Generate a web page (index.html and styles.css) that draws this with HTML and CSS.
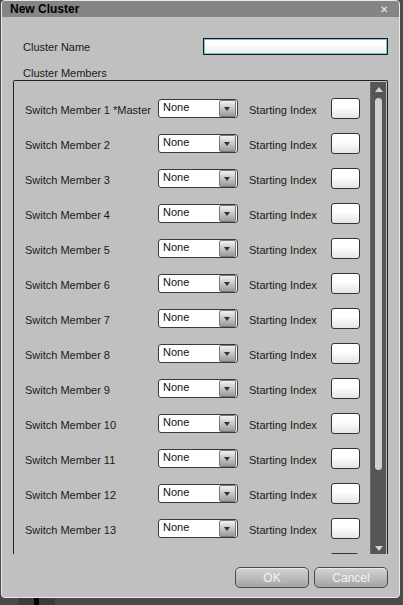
FILE: index.html
```html
<!DOCTYPE html>
<html>
<head>
<meta charset="utf-8">
<link rel="stylesheet" href="styles.css">
</head>
<body>
<div class="backdrop">
  <div class="dialog">
    <div class="titlebar">
      <span class="title">New Cluster</span>
      <span class="close">&#x2715;</span>
    </div>
    <div class="content">
      <div class="name-row">
        <span class="label">Cluster Name</span>
        <div class="name-input"></div>
      </div>
      <div class="members-label">Cluster Members</div>
      <div class="panel">
        <div class="rows">
          <div class="row"><span class="m-label">Switch Member 1 *Master</span><div class="select"><span>None</span><span class="arrow"></span></div><span class="si">Starting Index</span><div class="idx"></div></div>
          <div class="row"><span class="m-label">Switch Member 2</span><div class="select"><span>None</span><span class="arrow"></span></div><span class="si">Starting Index</span><div class="idx"></div></div>
          <div class="row"><span class="m-label">Switch Member 3</span><div class="select"><span>None</span><span class="arrow"></span></div><span class="si">Starting Index</span><div class="idx"></div></div>
          <div class="row"><span class="m-label">Switch Member 4</span><div class="select"><span>None</span><span class="arrow"></span></div><span class="si">Starting Index</span><div class="idx"></div></div>
          <div class="row"><span class="m-label">Switch Member 5</span><div class="select"><span>None</span><span class="arrow"></span></div><span class="si">Starting Index</span><div class="idx"></div></div>
          <div class="row"><span class="m-label">Switch Member 6</span><div class="select"><span>None</span><span class="arrow"></span></div><span class="si">Starting Index</span><div class="idx"></div></div>
          <div class="row"><span class="m-label">Switch Member 7</span><div class="select"><span>None</span><span class="arrow"></span></div><span class="si">Starting Index</span><div class="idx"></div></div>
          <div class="row"><span class="m-label">Switch Member 8</span><div class="select"><span>None</span><span class="arrow"></span></div><span class="si">Starting Index</span><div class="idx"></div></div>
          <div class="row"><span class="m-label">Switch Member 9</span><div class="select"><span>None</span><span class="arrow"></span></div><span class="si">Starting Index</span><div class="idx"></div></div>
          <div class="row"><span class="m-label">Switch Member 10</span><div class="select"><span>None</span><span class="arrow"></span></div><span class="si">Starting Index</span><div class="idx"></div></div>
          <div class="row"><span class="m-label">Switch Member 11</span><div class="select"><span>None</span><span class="arrow"></span></div><span class="si">Starting Index</span><div class="idx"></div></div>
          <div class="row"><span class="m-label">Switch Member 12</span><div class="select"><span>None</span><span class="arrow"></span></div><span class="si">Starting Index</span><div class="idx"></div></div>
          <div class="row"><span class="m-label">Switch Member 13</span><div class="select"><span>None</span><span class="arrow"></span></div><span class="si">Starting Index</span><div class="idx"></div></div>
          <div class="row row-partial"><div class="idx"></div></div>
        </div>
        <div class="scrollbar">
          <span class="sb-up"></span>
          <div class="sb-track"><div class="sb-thumb"></div></div>
          <span class="sb-down"></span>
        </div>
      </div>
      <div class="buttons">
        <div class="btn">OK</div>
        <div class="btn">Cancel</div>
      </div>
    </div>
  </div>
  <div class="under">
    <span class="u1"></span><span class="u2"></span><span class="u3"></span>
  </div>
</div>
</body>
</html>
```
FILE: styles.css
```css
html, body {
  margin: 0;
  padding: 0;
}
body {
  width: 403px;
  height: 605px;
  overflow: hidden;
  background: #4a4a4a;
  font-family: "Liberation Sans", Arial, sans-serif;
  font-size: 11px;
  color: #1a1a1a;
}
.backdrop {
  display: flex;
  flex-direction: column;
  padding-left: 1px;
}
.dialog {
  width: 397px;
  height: 596px;
  border: 1px solid #e8e8e8;
  border-radius: 4px;
  background: #c0c0c0;
  overflow: hidden;
  display: flex;
  flex-direction: column;
}
.titlebar {
  height: 16px;
  background: #858585;
  display: flex;
  align-items: center;
  justify-content: space-between;
  padding: 0 11px 0 8px;
}
.title {
  font-weight: bold;
  font-size: 12px;
  color: #000;
}
.close {
  color: #d8d8d8;
  font-size: 10px;
  font-weight: bold;
}
.content {
  display: flex;
  flex-direction: column;
  padding-left: 11px;
}
.name-row {
  display: flex;
  align-items: center;
  justify-content: space-between;
  margin-top: 21px;
  width: 375px;
}
.label {
  padding-left: 10px;
}
.name-input {
  width: 183px;
  height: 15px;
  border: 1px solid #1a1a1a;
  box-shadow: inset 0 0 0 1px #6ec6d6;
  background: linear-gradient(#ffffff 30%, #ececec);
}
.members-label {
  padding-left: 10px;
  margin-top: 12px;
  height: 13px;
  line-height: 13px;
}
.panel {
  margin-top: 0;
  width: 373px;
  height: 473px;
  border: 1px solid #222;
  border-bottom: none;
  border-radius: 2px 2px 0 0;
  display: flex;
  overflow: hidden;
}
.rows {
  flex: 1;
  padding-top: 10px;
  padding-left: 11px;
}
.row {
  height: 35px;
  display: flex;
  align-items: center;
}
.row-partial {
  padding-left: 305px;
  align-items: flex-start;
  padding-top: 8px;
  box-sizing: border-box;
}
.m-label {
  width: 133px;
  padding-top: 3px;
}
.select {
  height: 17px;
  border: 1px solid #3a3a3a;
  border-radius: 3px;
  background: #fff;
  display: flex;
  align-items: center;
  justify-content: space-between;
  padding-left: 4px;
  box-sizing: content-box;
  width: 74px;
  font-size: 11px;
}
.select span:first-child {
  margin-top: -3px;
  color: #111;
}
.arrow {
  width: 15px;
  height: 15px;
  margin-right: 1px;
  border: 1px solid #777;
  border-radius: 2px;
  background: linear-gradient(#f2f2f2, #9a9a9a);
  position: relative;
}
.arrow::after {
  content: "";
  position: absolute;
  left: 4px;
  top: 6px;
  border-left: 3.5px solid transparent;
  border-right: 3.5px solid transparent;
  border-top: 4px solid #333;
}
.si {
  margin-left: 11px;
  width: 82px;
  padding-top: 3px;
}
.idx {
  width: 27px;
  height: 19px;
  border: 1px solid #333;
  border-radius: 3px;
  background: linear-gradient(#ffffff 40%, #e4e4e4);
  margin-top: -1px;
  flex: none;
}
.scrollbar {
  width: 15px;
  margin-right: 1px;
  margin-top: 1px;
  background: #565656;
  display: flex;
  flex-direction: column;
  align-items: center;
  border-left: 1px solid #6a6a6a;
}
.sb-up {
  margin-top: 5px;
  border-left: 4px solid transparent;
  border-right: 4px solid transparent;
  border-bottom: 5px solid #d4d4d4;
}
.sb-track {
  margin-top: 6px;
  flex: 1;
  display: flex;
  flex-direction: column;
}
.sb-thumb {
  width: 7px;
  height: 372px;
  border-radius: 4px;
  background: #cfcfcf;
}
.sb-down {
  margin-bottom: 3px;
  border-left: 4px solid transparent;
  border-right: 4px solid transparent;
  border-top: 5px solid #d4d4d4;
}
.buttons {
  display: flex;
  justify-content: flex-end;
  gap: 5px;
  width: 375px;
  margin-top: 13px;
}
.btn {
  width: 72px;
  height: 19px;
  border: 1px solid #4a4a4a;
  border-radius: 5px;
  background: linear-gradient(#d4d4d4, #a4a4a4);
  color: #f4f4f4;
  font-size: 12px;
  display: flex;
  align-items: center;
  justify-content: center;
  box-shadow: inset 0 1px 0 #e8e8e8;
}
.under {
  display: flex;
  padding-left: 17px;
  height: 7px;
}
.u1 { width: 16px; background: #3c3c3c; }
.u2 { width: 5px; background: #000; }
.u3 { width: 16px; background: #3c3c3c; }
```
